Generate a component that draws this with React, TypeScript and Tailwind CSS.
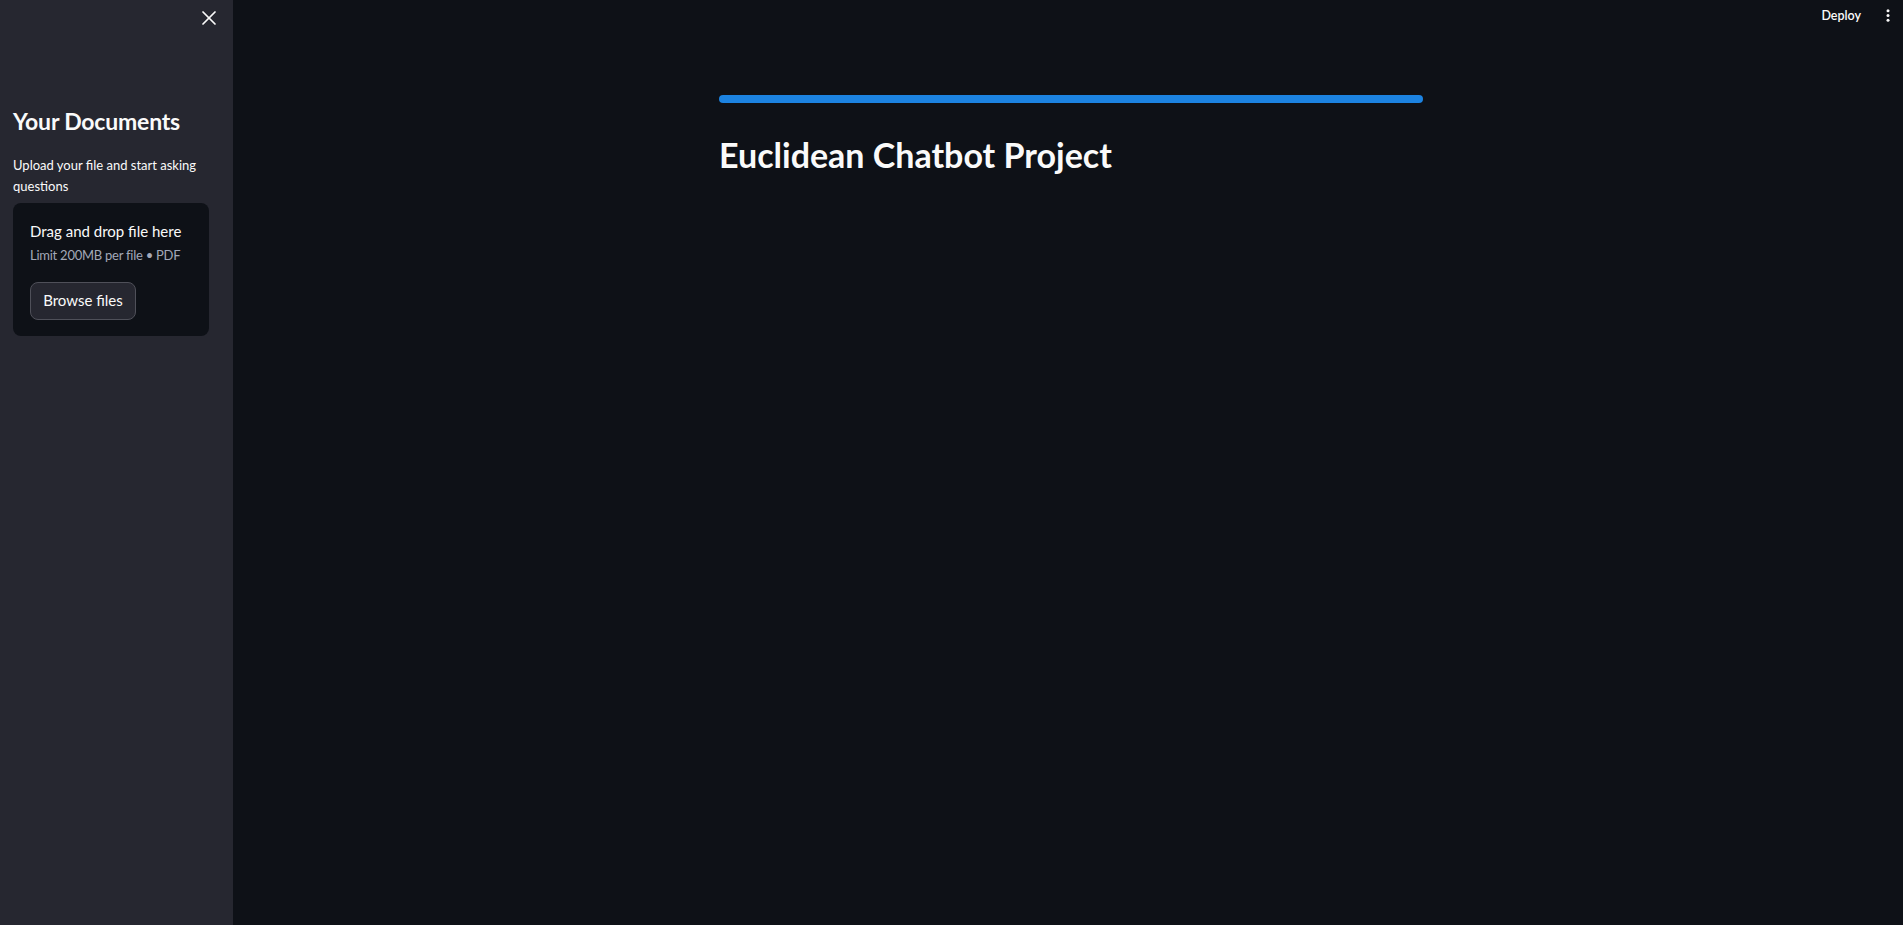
import { X } from "lucide-react";

function Uploader() {
    return (
        <div className="mt-[6px] rounded-lg bg-[#0e1117] px-[17px] pt-[16px] pb-[16px]">
            <p className="text-[15px] leading-[24px] text-[#fafafa]">Drag and drop file here</p>
            <p className="mt-[2px] text-[13px] leading-[21px] tracking-[-0.25px] text-[#a3a8b8]">Limit 200MB per file • PDF</p>
            <button className="mt-[16px] flex h-[38px] w-[106px] items-center justify-center rounded-lg border border-[#4f5059] bg-[#262730] text-[15px] text-[#fafafa]">
                Browse files
            </button>
        </div>
    );
}

export default function App() {
    return (
        <div className="flex h-screen w-full bg-[#0e1117] font-['Lato',sans-serif] text-[#fafafa]">
            <aside className="flex w-[233px] shrink-0 flex-col bg-[#262730] pl-[13px] pr-[24px]">
                <div className="-mr-[12px] flex h-[35px] items-center justify-end">
                    <X size={24} strokeWidth={1.75} className="text-[#fafafa]" />
                </div>
                <h2 className="mt-[73px] text-[23px] font-bold leading-[1.2] tracking-[-0.2px]">Your Documents</h2>
                <p className="mt-[19px] text-[13px] leading-[21px]">Upload your file and start asking questions</p>
                <Uploader />
            </aside>

            <main className="flex flex-1 flex-col">
                <header className="flex h-[32px] items-center justify-end gap-[25px] pr-[13px]">
                    <span className="text-[12.5px] font-semibold">Deploy</span>
                    <svg width="4" height="13" viewBox="0 0 4 13" className="mb-[2px] text-[#fafafa]">
                        <circle cx="2" cy="1.75" r="1.5" fill="currentColor" />
                        <circle cx="2" cy="6.5" r="1.5" fill="currentColor" />
                        <circle cx="2" cy="11.25" r="1.5" fill="currentColor" />
                    </svg>
                </header>

                <section className="mx-auto w-[704px] translate-x-[3px] pt-[63px]">
                    <div className="h-[8px] w-full rounded-full bg-[#1c83e1]" />
                    <h1 className="mt-[32px] text-[34px] font-bold leading-[1.2]">Euclidean Chatbot Project</h1>
                </section>
            </main>
        </div>
    );
}
